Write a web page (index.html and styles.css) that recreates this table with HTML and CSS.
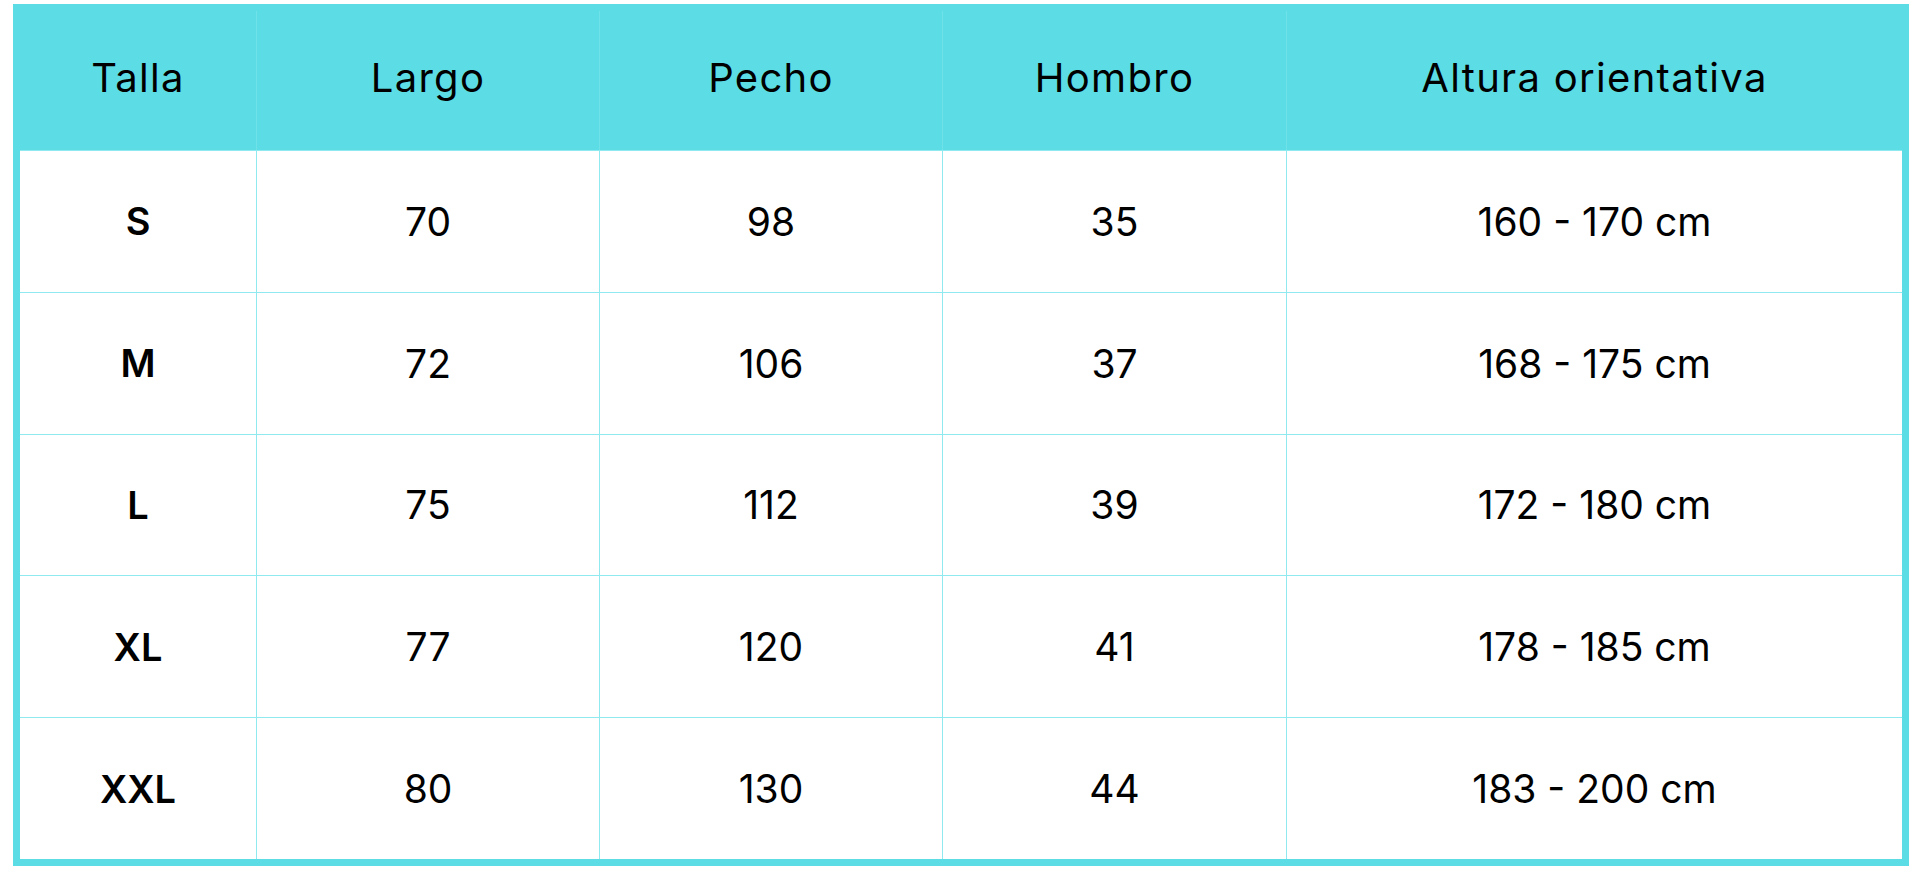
FILE: index.html
```html
<!DOCTYPE html>
<html lang="es">
<head>
<meta charset="utf-8">
<title>Guía de tallas</title>
<link rel="stylesheet" href="styles.css">
</head>
<body>
<div class="page">
  <div class="chart" role="table" aria-label="Guía de tallas">
    <div class="cell head" role="columnheader">Talla</div>
    <div class="cell head" role="columnheader">Largo</div>
    <div class="cell head" role="columnheader">Pecho</div>
    <div class="cell head" role="columnheader">Hombro</div>
    <div class="cell head last" role="columnheader">Altura orientativa</div>

    <div class="cell size" role="cell">S</div>
    <div class="cell" role="cell">70</div>
    <div class="cell" role="cell">98</div>
    <div class="cell" role="cell">35</div>
    <div class="cell last" role="cell">160 - 170 cm</div>

    <div class="cell size" role="cell">M</div>
    <div class="cell" role="cell">72</div>
    <div class="cell" role="cell">106</div>
    <div class="cell" role="cell">37</div>
    <div class="cell last" role="cell">168 - 175 cm</div>

    <div class="cell size" role="cell">L</div>
    <div class="cell" role="cell">75</div>
    <div class="cell" role="cell">112</div>
    <div class="cell" role="cell">39</div>
    <div class="cell last" role="cell">172 - 180 cm</div>

    <div class="cell size" role="cell">XL</div>
    <div class="cell" role="cell">77</div>
    <div class="cell" role="cell">120</div>
    <div class="cell" role="cell">41</div>
    <div class="cell last" role="cell">178 - 185 cm</div>

    <div class="cell size" role="cell">XXL</div>
    <div class="cell" role="cell">80</div>
    <div class="cell" role="cell">130</div>
    <div class="cell" role="cell">44</div>
    <div class="cell last" role="cell">183 - 200 cm</div>
  </div>
</div>
</body>
</html>
```

FILE: styles.css
```css
html, body {
  margin: 0;
  padding: 0;
  background: #ffffff;
}

.page {
  padding: 4px 0 0 13px;
}

.chart {
  display: grid;
  grid-template-columns: 237px 343px 343px 344px 615px;
  grid-template-rows: 139px repeat(5, 1fr);
  width: 1882px;
  height: 848px;
  border: 7px solid #5cdde5;
  background: #ffffff;
  font-family: "Inter", "Noto Sans", sans-serif;
  font-size: 39px;
  color: #000000;
}

.cell {
  display: flex;
  align-items: center;
  justify-content: center;
  border-right: 1px solid #8fe9ee;
  border-top: 1px solid #8fe9ee;
  box-sizing: border-box;
}

.cell.last {
  border-right: none;
}

.cell.head {
  background: #5cdde5;
  border-top: none;
  border-right-color: #6fe1e8;
  padding-bottom: 6px;
  font-size: 40px;
  letter-spacing: 1.3px;
}

.cell.size {
  font-weight: 600;
  font-size: 38px;
}
```
